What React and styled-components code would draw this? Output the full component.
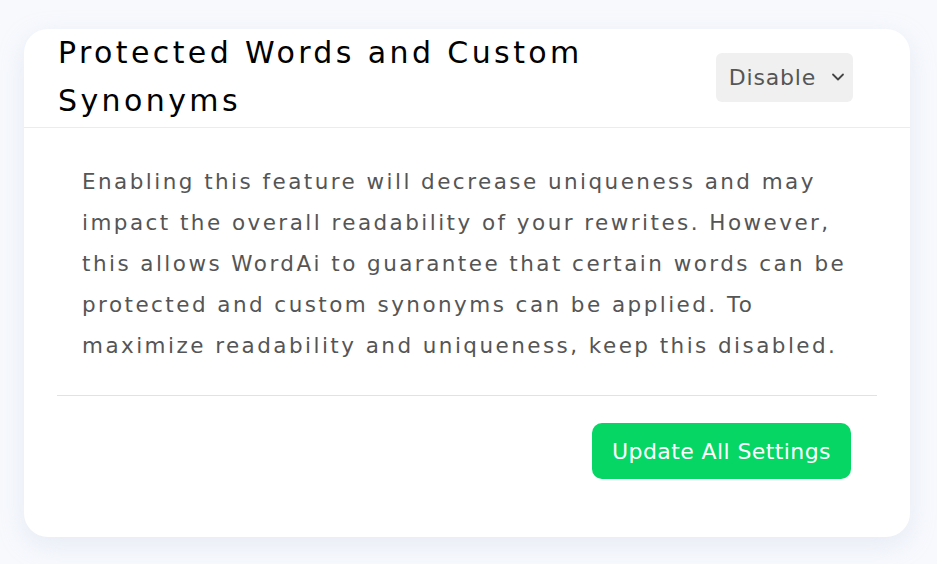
import styled, { createGlobalStyle } from "styled-components"

const GlobalStyle = createGlobalStyle`
    html, body {
        margin: 0;
        padding: 0;
        background: #f7f9fd;
        font-family: "DejaVu Sans", "Open Sans", sans-serif;
    }
`

const Page = styled.div`
    padding: 29px 27px 27px 24px;
    min-height: 564px;
    box-sizing: border-box;
`

const Card = styled.section`
    background: #ffffff;
    border-radius: 24px;
    box-shadow: 0 8px 24px rgba(200, 210, 230, 0.35);
    padding-bottom: 58px;
`

const Header = styled.header`
    display: flex;
    justify-content: space-between;
    align-items: center;
    padding: 0 57px 2px 34px;
    border-bottom: 1px solid #ececec;
`

const Title = styled.h2`
    margin: 0;
    width: 580px;
    font-size: 30px;
    font-weight: 400;
    line-height: 48px;
    letter-spacing: 3.4px;
    color: #000;
`

const Select = styled.div`
    display: flex;
    align-items: center;
    gap: 15px;
    height: 49px;
    padding: 0 8px 0 13px;
    box-sizing: border-box;
    background: #f0f0f0;
    border-radius: 6px;
    font-size: 22px;
    letter-spacing: 0.8px;
    color: #555;
`

const Body = styled.div`
    padding: 0 33px;
`

const Description = styled.p`
    margin: 0;
    padding: 33px 25px 29px;
    font-size: 21.5px;
    line-height: 41px;
    letter-spacing: 2.45px;
    color: #555;
    border-bottom: 1px solid #e2e2e2;
`

const Actions = styled.div`
    display: flex;
    justify-content: flex-end;
    padding: 27px 26px 0 0;
`

const Button = styled.button`
    height: 56px;
    width: 259px;
    border: none;
    border-radius: 10px;
    background: #05d664;
    color: #fff;
    font-family: inherit;
    font-size: 22px;
    letter-spacing: 0.4px;
    cursor: pointer;
`

const Chevron = () => (
    <svg width="14" height="10" viewBox="0 0 14 10" fill="none">
        <path d="M2 2.5l5 5 5-5" stroke="#444" strokeWidth="1.8" strokeLinecap="round" strokeLinejoin="round" />
    </svg>
)

const App = () => {
    return (
        <Page>
            <GlobalStyle />
            <Card>
                <Header>
                    <Title>Protected Words and Custom Synonyms</Title>
                    <Select>
                        Disable
                        <Chevron />
                    </Select>
                </Header>
                <Body>
                    <Description>
                        Enabling this feature will decrease uniqueness and may impact the overall readability of your rewrites. However, this allows WordAi to guarantee that certain words can be protected and custom synonyms can be applied. To maximize readability and uniqueness, keep this disabled.
                    </Description>
                    <Actions>
                        <Button>Update All Settings</Button>
                    </Actions>
                </Body>
            </Card>
        </Page>
    )
}

export default App
